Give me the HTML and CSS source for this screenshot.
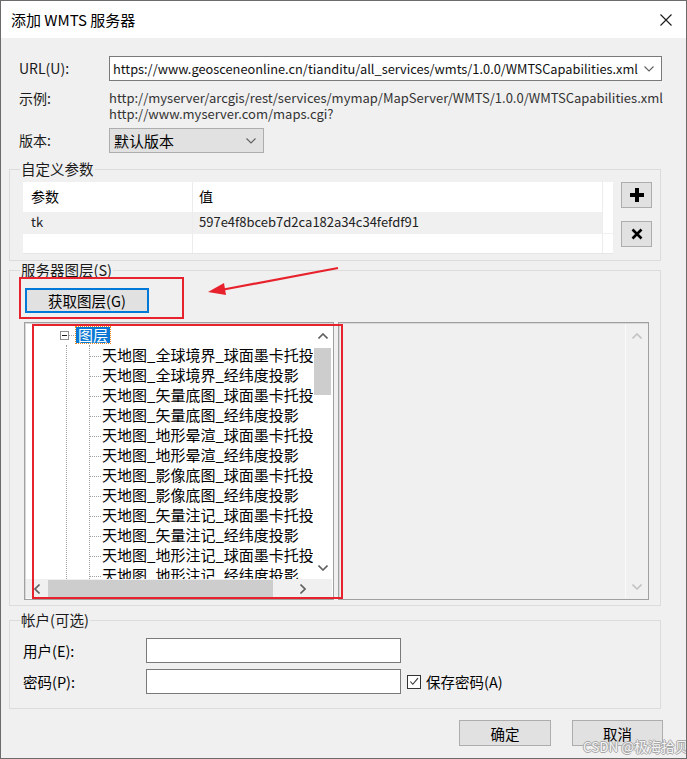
FILE: index.html
```html
<!DOCTYPE html>
<html lang="zh-CN">
<head>
  <meta charset="UTF-8">
  <title>添加 WMTS 服务器</title>
  <link rel="stylesheet" href="styles.css">
</head>
<body>

<div class="window">
  <div class="titlebar">
    <span>添加 WMTS 服务器</span>
    <svg class="close" width="12" height="12" viewBox="0 0 12 12"><path d="M0.5 0.5 L11.5 11.5 M11.5 0.5 L0.5 11.5" stroke="#1a1a1a" stroke-width="1.1" fill="none"/></svg>
  </div>

  <div class="content">
    <div class="field-row url-row">
      <label class="lbl">URL(U):</label>
      <div class="combo">
        <span class="combo-text">https://www.geosceneonline.cn/tianditu/all_services/wmts/1.0.0/WMTSCapabilities.xml</span>
        <svg class="chev" width="10" height="6" viewBox="0 0 10 6"><path d="M0.5 0.5 L5 5 L9.5 0.5" stroke="#606060" stroke-width="1.1" fill="none"/></svg>
      </div>
    </div>

    <div class="field-row example-row">
      <label class="lbl">示例:</label>
      <div class="examples">
        <div>http://myserver/arcgis/rest/services/mymap/MapServer/WMTS/1.0.0/WMTSCapabilities.xml</div>
        <div>http://www.myserver.com/maps.cgi?</div>
      </div>
    </div>

    <div class="field-row version-row">
      <label class="lbl">版本:</label>
      <div class="select">
        <span>默认版本</span>
        <svg class="chev" width="10" height="6" viewBox="0 0 10 6"><path d="M0.5 0.5 L5 5 L9.5 0.5" stroke="#606060" stroke-width="1.1" fill="none"/></svg>
      </div>
    </div>

    <fieldset class="group params">
      <legend>自定义参数</legend>
      <div class="group-body params-body">
        <div class="grid">
          <div class="grid-row head">
            <div class="cell key">参数</div>
            <div class="cell val">值</div>
            <div class="cell end"></div>
          </div>
          <div class="grid-row sel">
            <div class="cell key">tk</div>
            <div class="cell val">597e4f8bceb7d2ca182a34c34fefdf91</div>
            <div class="cell end"></div>
          </div>
          <div class="grid-row empty">
            <div class="cell key"></div>
            <div class="cell val"></div>
            <div class="cell end"></div>
          </div>
        </div>
        <div class="side-btns">
          <button class="icon-btn">
            <svg width="16" height="16" viewBox="0 0 16 16"><path d="M8 1 V15 M1 8 H15" stroke="#000" stroke-width="4" fill="none"/></svg>
          </button>
          <button class="icon-btn">
            <svg width="12" height="12" viewBox="0 0 12 12"><path d="M1.5 1.5 L10.5 10.5 M10.5 1.5 L1.5 10.5" stroke="#000" stroke-width="2.6" fill="none"/></svg>
          </button>
        </div>
      </div>
    </fieldset>

    <fieldset class="group layers">
      <legend>服务器图层(S)</legend>
      <div class="group-body layers-body">
        <button class="btn fetch-btn">获取图层(G)</button>
        <div class="panes">
          <div class="tree">
            <div class="tree-view">
              <div class="root-row">
                <span class="minus"></span>
                <span class="hstub short"></span>
                <span class="root-label">图层</span>
              </div>
              <div class="branch">
                <div class="children">
                  <div class="item"><span class="hstub"></span>天地图_全球境界_球面墨卡托投影</div>
                  <div class="item"><span class="hstub"></span>天地图_全球境界_经纬度投影</div>
                  <div class="item"><span class="hstub"></span>天地图_矢量底图_球面墨卡托投影</div>
                  <div class="item"><span class="hstub"></span>天地图_矢量底图_经纬度投影</div>
                  <div class="item"><span class="hstub"></span>天地图_地形晕渲_球面墨卡托投影</div>
                  <div class="item"><span class="hstub"></span>天地图_地形晕渲_经纬度投影</div>
                  <div class="item"><span class="hstub"></span>天地图_影像底图_球面墨卡托投影</div>
                  <div class="item"><span class="hstub"></span>天地图_影像底图_经纬度投影</div>
                  <div class="item"><span class="hstub"></span>天地图_矢量注记_球面墨卡托投影</div>
                  <div class="item"><span class="hstub"></span>天地图_矢量注记_经纬度投影</div>
                  <div class="item"><span class="hstub"></span>天地图_地形注记_球面墨卡托投影</div>
                  <div class="item"><span class="hstub"></span>天地图_地形注记_经纬度投影</div>
                </div>
              </div>
            </div>
            <div class="vscroll">
              <div class="arrow">
                <svg width="10" height="6" viewBox="0 0 10 6"><path d="M0.5 5.5 L5 1 L9.5 5.5" stroke="#606060" stroke-width="1.6" fill="none"/></svg>
              </div>
              <div class="vthumb"></div>
              <div class="spacer"></div>
              <div class="arrow">
                <svg width="10" height="6" viewBox="0 0 10 6"><path d="M0.5 0.5 L5 5 L9.5 0.5" stroke="#606060" stroke-width="1.6" fill="none"/></svg>
              </div>
            </div>
            <div class="hscroll">
              <div class="harrow">
                <svg width="6" height="10" viewBox="0 0 6 10"><path d="M5.5 0.5 L1 5 L5.5 9.5" stroke="#606060" stroke-width="1.6" fill="none"/></svg>
              </div>
              <div class="hthumb"></div>
              <div class="spacer"></div>
              <div class="harrow">
                <svg width="6" height="10" viewBox="0 0 6 10"><path d="M0.5 0.5 L5 5 L0.5 9.5" stroke="#606060" stroke-width="1.6" fill="none"/></svg>
              </div>
            </div>
            <div class="corner"></div>
          </div>

          <div class="list">
            <div class="list-area"></div>
            <div class="vscroll disabled">
              <div class="arrow">
                <svg width="10" height="6" viewBox="0 0 10 6"><path d="M0.5 5.5 L5 1 L9.5 5.5" stroke="#c3c3c3" stroke-width="1.6" fill="none"/></svg>
              </div>
              <div class="spacer"></div>
              <div class="arrow">
                <svg width="10" height="6" viewBox="0 0 10 6"><path d="M0.5 0.5 L5 5 L9.5 0.5" stroke="#c3c3c3" stroke-width="1.6" fill="none"/></svg>
              </div>
            </div>
          </div>
        </div>
      </div>
    </fieldset>

    <fieldset class="group account">
      <legend>帐户(可选)</legend>
      <div class="group-body account-body">
        <div class="acc-row">
          <label class="acc-lbl">用户(E):</label>
          <div class="input"></div>
        </div>
        <div class="acc-row">
          <label class="acc-lbl">密码(P):</label>
          <div class="input"></div>
          <span class="check">
            <svg width="13" height="13" viewBox="0 0 13 13"><path d="M2.5 6.5 L5.2 9.5 L10.8 2.8" stroke="#333" stroke-width="1.2" fill="none"/></svg>
          </span>
          <span class="check-text">保存密码(A)</span>
        </div>
      </div>
    </fieldset>

    <div class="footer">
      <button class="btn ok-btn">确定</button>
      <button class="btn cancel-btn">取消</button>
    </div>
  </div>

  <!-- red annotations drawn over the dialog -->
  <div class="mark mark-btn"></div>
  <div class="mark mark-tree"></div>
  <svg class="mark-arrow" width="150" height="40" viewBox="0 0 150 40">
    <path d="M137 7 L20 29" stroke="#e8222c" stroke-width="2.2" fill="none"/>
    <path d="M7 31 L23 22 L25 34 Z" fill="#e8222c"/>
  </svg>
  <div class="watermark">CSDN @极海拾贝</div>
</div>

</body>
</html>
```

FILE: styles.css
```css
* {
  box-sizing: border-box;
}
body {
  margin: 0;
  font-family: "Noto Sans CJK SC", "Noto Sans", sans-serif;
  font-size: 14px;
  color: #000;
  background: #f0f0f0;
}
.window {
  position: relative;
  width: 687px;
  height: 759px;
  border: 1px solid #6b6b6b;
  background: #f0f0f0;
  overflow: hidden;
}
.titlebar {
  height: 37px;
  background: #fff;
  display: flex;
  align-items: center;
  justify-content: space-between;
  padding: 0 14px 0 10px;
  font-size: 15px;
  line-height: 18px;
}
.content {
  padding-left: 8px;
}
.field-row {
  display: flex;
  padding-left: 10px;
}
.lbl {
  width: 90px;
  line-height: 25px;
  color: #1a1a1a;
}
.url-row {
  margin-top: 18px;
}
.combo {
  width: 553px;
  height: 25px;
  background: #fff;
  border: 1px solid #7a7a7a;
  display: flex;
  align-items: center;
  justify-content: space-between;
  padding: 0 7px 0 3px;
}
.combo-text {
  font-size: 12.8px;
  color: #111;
  white-space: nowrap;
  overflow: hidden;
}
.chev {
  flex-shrink: 0;
}
.example-row {
  margin-top: 6px;
}
.example-row .lbl {
  line-height: 22px;
}
.examples {
  font-size: 13px;
  line-height: 16px;
  color: #333;
  padding-top: 3px;
  white-space: nowrap;
}
.version-row {
  margin-top: 6px;
}
.select {
  width: 155px;
  height: 25px;
  background: #e1e1e1;
  border: 1px solid #adadad;
  display: flex;
  align-items: center;
  justify-content: space-between;
  padding: 0 7px 0 4px;
  font-size: 15px;
}

/* group boxes */
.group {
  width: 652px;
  margin: 0;
  padding: 0;
  border: 1px solid #dcdcdc;
  min-width: 0;
}
.group legend {
  margin-left: 10px;
  padding: 0 1px;
  line-height: 18px;
  font-size: 14.5px;
  color: #1a1a1a;
}
.params {
  margin-top: 7px;
}
.params-body {
  display: flex;
  padding: 4px 7px 6px 13px;
}
.grid {
  width: 590px;
  background: #fff;
  border-bottom: 1px solid #e6e6e6;
}
.grid-row {
  display: flex;
}
.cell {
  font-size: 14px;
  white-space: nowrap;
}
.cell.key {
  width: 170px;
  padding-left: 8px;
  border-right: 1px solid #ececec;
}
.cell.val {
  width: 409px;
  padding-left: 6px;
}
.cell.end {
  width: 11px;
  border-left: 1px solid #ececec;
  background: #fff;
}
.head {
  height: 30px;
  line-height: 28px;
}
.sel {
  height: 21px;
  line-height: 20px;
}
.sel .key,
.sel .val {
  background: #f0f0f0;
}
.sel .cell {
  font-size: 13px;
  color: #222;
}
.empty {
  height: 20px;
  border-top: 1px solid #f0f0f0;
}
.side-btns {
  display: flex;
  flex-direction: column;
  gap: 13px;
  margin-left: 8px;
}
.icon-btn {
  width: 31px;
  height: 26px;
  padding: 0;
  background: #e1e1e1;
  border: 1px solid #adadad;
  display: flex;
  align-items: center;
  justify-content: center;
}

.btn {
  font-family: inherit;
  font-size: 14.5px;
  background: #e1e1e1;
  border: 1px solid #adadad;
  color: #000;
  padding: 0;
}
.layers-body {
  padding: 9px 0 5px 14px;
}
.fetch-btn {
  display: block;
  margin-left: 1px;
  width: 124px;
  height: 25px;
  border: 2px solid #0078d7;
}
.panes {
  display: flex;
  gap: 4px;
  margin-top: 9px;
}
.tree,
.list {
  height: 278px;
  border: 1px solid #a0a0a0;
  box-shadow: inset 1px 1px 0 #d8d8d8;
  padding: 1px;
}
.tree {
  width: 310px;
  background: #fff;
  display: grid;
  grid-template-columns: 1fr 19px;
  grid-template-rows: 1fr 19px;
}
.tree-view {
  overflow: hidden;
  padding-top: 1px;
  font-size: 15px;
}
.root-row {
  display: flex;
  align-items: center;
  height: 20px;
  padding-left: 34px;
}
.minus {
  width: 9px;
  height: 9px;
  border: 1px solid #8f8f8f;
  background: #fff;
  position: relative;
}
.minus::after {
  content: "";
  position: absolute;
  left: 1px;
  top: 3px;
  width: 5px;
  height: 1px;
  background: #1a1a1a;
}
.hstub {
  display: inline-block;
  width: 11px;
  border-top: 1px dotted #a0a0a0;
  margin-right: 1px;
  vertical-align: middle;
}
.hstub.short {
  width: 7px;
  margin-right: 0;
}
.root-label {
  background: #0a78d4;
  color: #fff;
  line-height: 16px;
  padding: 0 2px;
  outline: 1px dotted #e8891c;
}
.branch {
  margin-left: 40px;
  border-left: 1px dotted #a0a0a0;
}
.children {
  margin-left: 22px;
  border-left: 1px dotted #a0a0a0;
}
.item {
  height: 20px;
  line-height: 20px;
  white-space: nowrap;
}

.vscroll {
  display: flex;
  flex-direction: column;
  background: #fff;
}
.vscroll .arrow {
  height: 23px;
  display: flex;
  align-items: center;
  justify-content: center;
}
.vthumb {
  height: 47px;
  margin: 1px 1px 0;
  background: #cdcdcd;
}
.spacer {
  flex: 1;
}
.hscroll {
  display: flex;
  background: #f0f0f0;
}
.harrow {
  width: 21px;
  display: flex;
  align-items: center;
  justify-content: center;
}
.hthumb {
  width: 225px;
  margin: 1px 0 1px 1px;
  background: #cdcdcd;
}
.corner {
  background: #f0f0f0;
}
.list {
  width: 311px;
  background: #f0f0f0;
  display: flex;
}
.list-area {
  flex: 1;
}
.vscroll.disabled {
  width: 22px;
  background: #f0f0f0;
  border-left: 1px solid #fafafa;
}

.account {
  margin-top: 5px;
}
.account-body {
  padding: 9px 0 14px 13px;
  display: flex;
  flex-direction: column;
  gap: 6px;
}
.acc-row {
  display: flex;
  align-items: center;
  height: 25px;
}
.acc-lbl {
  width: 123px;
  font-size: 14.5px;
}
.input {
  width: 255px;
  height: 25px;
  background: #fff;
  border: 1px solid #7a7a7a;
}
.check {
  width: 14px;
  height: 14px;
  margin-left: 6px;
  border: 1px solid #333;
  background: #fff;
  display: flex;
  align-items: center;
  justify-content: center;
}
.check-text {
  margin-left: 5px;
  font-size: 14.5px;
}

.footer {
  width: 654px;
  display: flex;
  justify-content: flex-end;
  gap: 21px;
  margin-top: 11px;
}
.ok-btn {
  width: 92px;
  height: 26px;
}
.cancel-btn {
  width: 91px;
  height: 26px;
}

/* annotations */
.mark {
  position: absolute;
  border: 2px solid #e8222c;
}
.mark-btn {
  left: 18px;
  top: 276px;
  width: 165px;
  height: 42px;
}
.mark-tree {
  left: 31px;
  top: 323px;
  width: 311px;
  height: 275px;
}
.mark-arrow {
  position: absolute;
  left: 200px;
  top: 260px;
}
.watermark {
  position: absolute;
  left: 582px;
  top: 735px;
  font-size: 13.5px;
  color: rgba(255, 255, 255, 0.9);
  text-shadow: 1px 0 0 #a8a8a8, -1px 0 0 #a8a8a8, 0 1px 0 #a8a8a8, 0 -1px 0 #a8a8a8;
  white-space: nowrap;
}
```
